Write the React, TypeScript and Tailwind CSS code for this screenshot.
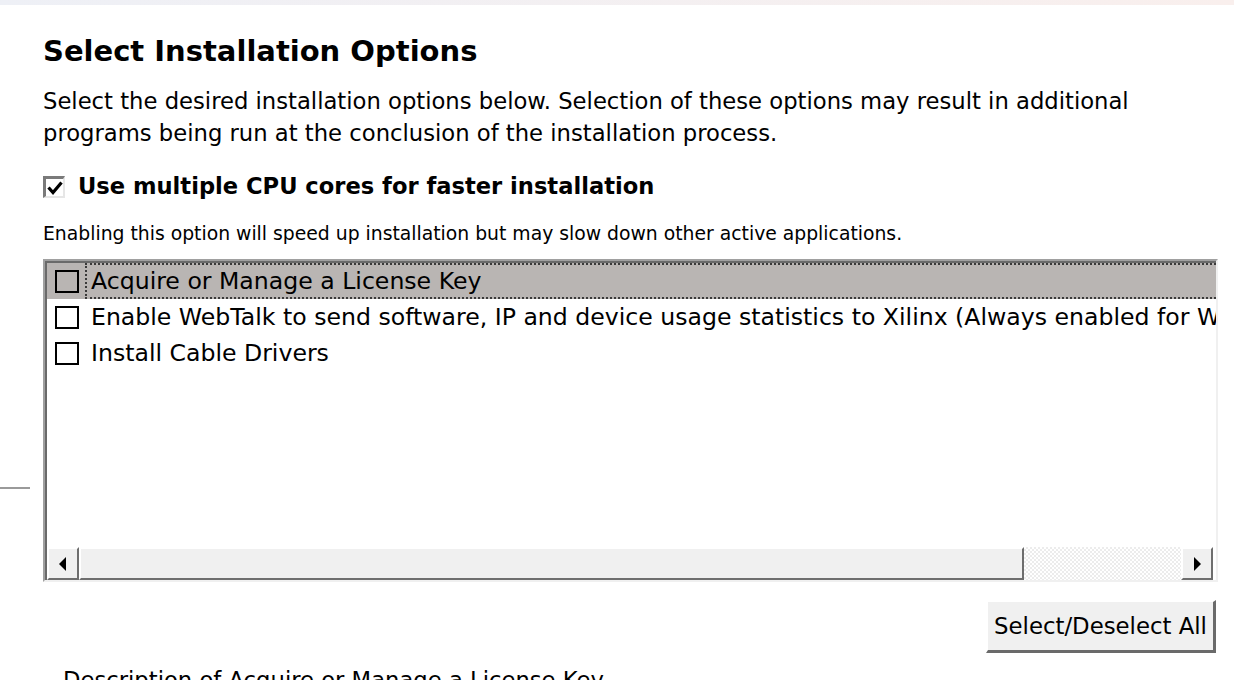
import React from "react";

const ListRow: React.FC<{ label: string; selected?: boolean }> = ({ label, selected }) => (
  <div className={`flex h-[36px] items-center shrink-0 ${selected ? "bg-[#b9b5b3]" : ""}`}>
    <div className="ml-[8px] h-[23px] w-[24px] shrink-0 border-2 border-black" />
    <div
      className={`ml-[6px] flex h-full flex-1 items-center whitespace-nowrap border-y-2 border-l-2 border-dotted pl-[4px] pt-[2px] text-[23.6px] text-black ${
        selected ? "border-[#3a3a3a]" : "border-transparent"
      }`}
    >
      {label}
    </div>
  </div>
);

const ScrollButton: React.FC<{ dir: "left" | "right" }> = ({ dir }) => (
  <div className="flex h-full w-[32px] shrink-0 items-center justify-center border-t-2 border-l-2 border-r-2 border-b-2 border-t-white border-l-white border-r-[#6e6e6e] border-b-[#6e6e6e] bg-[#f0f0f0]">
    <svg width="8" height="14" viewBox="0 0 8 14">
      {dir === "left" ? <polygon points="7,0 7,14 0,7" fill="#000" /> : <polygon points="1,0 1,14 8,7" fill="#000" />}
    </svg>
  </div>
);

export default function App() {
  return (
    <div className="relative h-[680px] w-[1234px] overflow-hidden bg-white font-['DejaVu_Sans',Verdana,sans-serif] text-black">
      <div className="h-[5px] bg-gradient-to-r from-[#eef0f6] to-[#f9efed]" />
      <div className="absolute left-0 top-[487px] h-[2px] w-[30px] bg-[#9a9a9a]" />

      <div className="ml-[43px] w-[1175px]">
        <h1 className="mt-[30px] text-[29px] font-bold leading-[32px]">Select Installation Options</h1>

        <p className="mt-[18px] text-[22.7px] leading-[32px]">
          Select the desired installation options below. Selection of these options may result in additional
          <br />
          programs being run at the conclusion of the installation process.
        </p>

        <div className="mt-[23px] flex h-[30px] items-center">
          <div className="flex h-[22px] w-[22px] shrink-0 items-center justify-center border-t-[3px] border-l-[3px] border-b-2 border-r-2 border-t-[#7a7a7a] border-l-[#7a7a7a] border-b-[#e6e6e6] border-r-[#e6e6e6] bg-white">
            <svg width="16" height="14" viewBox="0 0 16 14">
              <polyline points="1.5,6.5 6,11.5 14.5,1.5" fill="none" stroke="#000" strokeWidth="3.2" />
            </svg>
          </div>
          <span className="ml-[13px] text-[22.6px] font-bold">Use multiple CPU cores for faster installation</span>
        </div>

        <p className="mt-[20px] text-[18.8px] leading-[24px]">
          Enabling this option will speed up installation but may slow down other active applications.
        </p>

        <div className="mt-[13px] h-[323px] border-t-2 border-l-2 border-b-2 border-r-2 border-t-[#a0a0a0] border-l-[#a0a0a0] border-b-[#f0f0f0] border-r-[#f0f0f0]">
          <div className="flex h-full flex-col overflow-hidden border-t-2 border-l-2 border-t-[#6a6a6a] border-l-[#6a6a6a] bg-white">
            <div className="flex flex-1 flex-col overflow-hidden">
              <ListRow label="Acquire or Manage a License Key" selected />
              <ListRow label="Enable WebTalk to send software, IP and device usage statistics to Xilinx (Always enabled for WebPACK license)" />
              <ListRow label="Install Cable Drivers" />
            </div>
            <div className="flex h-[33px] shrink-0 pr-[3px]">
              <ScrollButton dir="left" />
              <div className="h-full w-[945px] shrink-0 border-t-2 border-l-2 border-r-2 border-b-2 border-t-white border-l-white border-r-[#6e6e6e] border-b-[#6e6e6e] bg-[#f0f0f0]" />
              <div className="h-full flex-1 bg-[repeating-conic-gradient(#ececec_0_25%,#ffffff_0_50%)] bg-[length:4px_4px]" />
              <ScrollButton dir="right" />
            </div>
          </div>
        </div>

        <div className="mt-[18px] flex justify-end pr-[2px]">
          <button className="h-[53px] w-[230px] border-t-2 border-l-2 border-b-[3px] border-r-[3px] border-t-white border-l-white border-b-[#6a6a6a] border-r-[#6a6a6a] bg-[#f0f0f0] text-[22.8px] text-black">
            Select/Deselect All
          </button>
        </div>

        <div className="mt-[14px] pl-[20px] text-[22.7px] leading-[26px]">Description of Acquire or Manage a License Key</div>
      </div>
    </div>
  );
}
